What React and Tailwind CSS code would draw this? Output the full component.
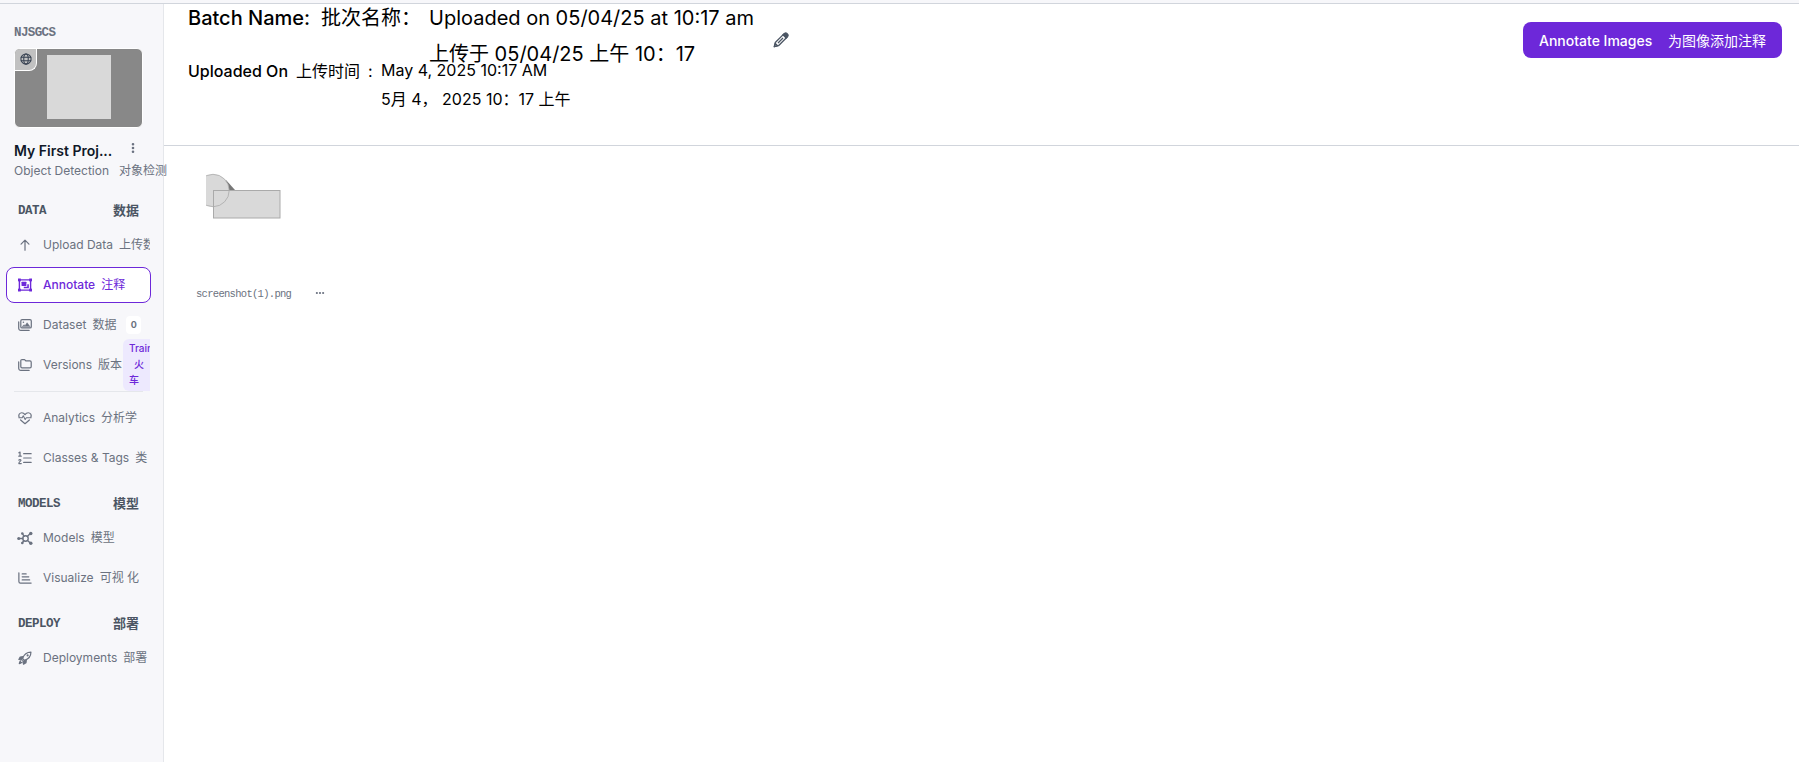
import { useState } from "react";
import clsx from "clsx";
import { FaEllipsisVertical, FaEllipsis } from "react-icons/fa6";

// Icons of the side menu
function Icon({ children, size = "size-[14px]" }) {
  return (
    <svg
      viewBox="0 0 16 16"
      className={clsx(size, "shrink-0")}
      fill="none"
      stroke="currentColor"
      strokeWidth="1.4"
      strokeLinecap="round"
      strokeLinejoin="round"
    >
      {children}
    </svg>
  );
}

const UploadIcon = () => (
  <Icon>
    <path d="M8 14V2.5M3.5 7L8 2.5 12.5 7" />
  </Icon>
);

const AnnotateIcon = () => (
  <Icon>
    <path d="M1.6 2.1h12.8v11.8H1.6z" strokeWidth="1.6" />
    <g fill="currentColor" stroke="none">
      <rect x="0" y=".6" width="3.2" height="3.2" />
      <rect x="12.8" y=".6" width="3.2" height="3.2" />
      <rect x="0" y="12.2" width="3.2" height="3.2" />
      <rect x="12.8" y="12.2" width="3.2" height="3.2" />
      <rect x="4" y="4.4" width="5.6" height="4.6" rx=".5" />
      <path d="M10.6 7h1.8v4.800H6.600V10h4z" />
    </g>
  </Icon>
);

const ImagesIcon = () => (
  <Icon>
    <rect x="3.2" y="1.8" width="12" height="9.6" rx="1.5" />
    <path d="M.8 4.5v7.3a2.4 2.4 0 0 0 2.4 2.4h9.5" />
    <path d="M5 9.8l1.8-2.2 1.2 1.2 2.4-3.4 3.2 4.4z" fill="currentColor" strokeWidth=".6" />
    <circle cx="6.2" cy="4.8" r=".9" fill="currentColor" stroke="none" />
  </Icon>
);

const FoldersIcon = () => (
  <Icon>
    <path d="M3.2 3.2c0-.8.6-1.4 1.4-1.4h2.9l1.6 1.6h4.6c.8 0 1.4.6 1.4 1.4v5c0 .8-.6 1.4-1.4 1.4H4.6c-.8 0-1.4-.6-1.4-1.4z" />
    <path d="M.8 4.5v7.3a2.4 2.4 0 0 0 2.4 2.4h9.5" />
  </Icon>
);

const PulseIcon = () => (
  <Icon>
    <path d="M1.3 7C.2 4.2 2 2 4.3 2 6 2 7.2 3 8 4.2 8.8 3 10 2 11.7 2 14 2 15.8 4.2 14.7 7" />
    <path d="M3 10.3l5 4.2 5-4.2" />
    <path d="M1 7.8h3.8l1.2-2.3 2.2 4.3 1.3-2H15" strokeWidth="1.2" />
  </Icon>
);

const ListIcon = () => (
  <Icon>
    <path d="M6.5 3H15M6.5 8H15M6.5 13H15" />
    <path d="M1 2l1.3-.7V5.8M.9 5.9h2.8M1 10.4c.6-1 2.5-.8 2.3.4-.2 1-2.3 1.5-2.3 3.5h2.7" />
  </Icon>
);

const NetworkIcon = () => (
  <Icon size="size-4">
    <circle cx="8.5" cy="8.5" r="2.7" />
    <path d="M5.8 8.5H2M10.3 6.5l2.7-2.7M10.5 10.5l2.5 2.2M7 6.2L5.7 4M6.8 10.7l-1.2 1.8" />
    <g fill="currentColor" stroke="none">
      <circle cx="1.7" cy="8.5" r="1.5" />
      <circle cx="13.8" cy="3.5" r="1.7" />
      <circle cx="13.8" cy="13.2" r="1.7" />
      <circle cx="5.3" cy="3.5" r="1.3" />
      <circle cx="5.3" cy="13" r="1.3" />
    </g>
  </Icon>
);

const ChartIcon = () => (
  <Icon>
    <path d="M1 2v10a1.8 1.8 0 0 0 1.8 1.8H15M4.8 3.3h4.5M4.8 6.700h7.500M4.800 10.200h8.500" />
  </Icon>
);

const RocketIcon = () => (
  <Icon>
    <path d="M5.2 8.5C6.8 4 10 1.2 14.8 1.2 14.8 6 12 9.2 7.5 10.8z" />
    <path
      d="M5.8 6.5L2.5 6.9 1 9.7l3.8.6M9.5 10.2l-.4 3.3L6.3 15l-.6-3.8M2.8 11.5c-1 .8-1.3 2.9-1.3 2.9s2.1-.3 2.9-1.3"
      fill="currentColor"
    />
    <circle cx="11" cy="5" r="1.2" fill="currentColor" stroke="none" />
  </Icon>
);

const GlobeIcon = () => (
  <Icon size="size-[12px]">
    <circle cx="8" cy="8" r="6.8" />
    <ellipse cx="8" cy="8" rx="3" ry="6.8" />
    <path d="M1.5 5.7h13M1.5 10.3h13" />
  </Icon>
);

const PencilIcon = () => (
  <svg
    viewBox="0 0 16 16"
    className="size-4 text-[#4b5563]"
    fill="none"
    stroke="currentColor"
    strokeWidth="1.3"
    strokeLinejoin="round"
  >
    <path d="M1.3 14.7l1-4.2 8.4-8.4 3.2 3.2-8.4 8.4z" />
    <path d="M10 2.8l1.5-1.4c.8-.7 1.7-.6 2.4.1l.6.6c.7.7.8 1.6.1 2.4L13.2 6z" fill="currentColor" />
    <path d="M5 11l5-5M1.3 14.7l1-3.2 2.2 2.2z" />
  </svg>
);

const sections = [
  {
    title: "DATA",
    titleZh: "数据",
    items: [
      { label: "Upload Data", zh: "上传数据", icon: UploadIcon },
      { label: "Annotate", zh: "注释", icon: AnnotateIcon },
      { label: "Dataset", zh: "数据", icon: ImagesIcon, count: 0 },
      { label: "Versions", zh: "版本", icon: FoldersIcon, train: true },
      { divider: true, label: "divider" },
      { label: "Analytics", zh: "分析学", icon: PulseIcon },
      { label: "Classes & Tags", zh: "类", icon: ListIcon },
    ],
  },
  {
    title: "MODELS",
    titleZh: "模型",
    items: [
      { label: "Models", zh: "模型", icon: NetworkIcon },
      { label: "Visualize", zh: "可视 化", icon: ChartIcon },
    ],
  },
  {
    title: "DEPLOY",
    titleZh: "部署",
    items: [{ label: "Deployments", zh: "部署", icon: RocketIcon }],
  },
];

function NavItem({ item, active, onSelect }) {
  const ItemIcon = item.icon;
  return (
    <button
      type="button"
      onClick={onSelect}
      className={clsx(
        "flex h-9 w-[145px] items-center overflow-x-clip rounded-lg border pl-[10px] text-left text-[12px] whitespace-nowrap",
        active ? "border-[#6d28d9] bg-white font-medium text-[#6d28d9]" : "border-transparent text-[#6b7280]"
      )}
    >
      <span className="flex w-[26px] shrink-0 items-center">
        <span className="flex w-4 justify-center">
          <ItemIcon />
        </span>
      </span>
      <span className="shrink-0">{item.label}</span>
      <span className="ml-[6px] shrink-0 font-normal">{item.zh}</span>
      {item.count !== undefined && (
        <span className="ml-[10px] flex h-[18px] w-[15px] shrink-0 items-center justify-center rounded bg-white text-[9px] font-bold">
          {item.count}
        </span>
      )}
      {item.train && (
        <span className="relative ml-px block h-[52px] w-[40px] shrink-0 rounded-md bg-[#ede9fe] pt-[1px] pl-[6px] text-[10px] leading-4 font-medium text-[#6d28d9]">
          Train
          <br />
          <span className="pl-[5px]">火</span>
          <br />车
        </span>
      )}
    </button>
  );
}

function Sidebar() {
  const [current, setCurrent] = useState("Annotate");

  return (
    <aside className="relative z-10 flex w-[164px] shrink-0 flex-col border-r border-gray-200 bg-[#f7f7fa]">
      <div className="mt-[21px] ml-[14px] h-4 font-['Liberation_Mono',monospace] text-[12.5px] leading-4 font-bold tracking-[-0.6px] text-[#6b7280]">
        NJSGCS
      </div>

      {/* Project thumbnail */}
      <div className="relative mt-[7px] ml-[14px] flex h-[80px] w-[129px] items-center justify-center overflow-hidden rounded-md border border-white bg-[#888888]">
        <div className="mb-[2px] size-[64px] bg-[#d9d9d9]" />
        <div className="absolute top-0 left-0 flex size-[22px] items-center justify-center rounded-br-lg border-r border-b border-white bg-[#c1c1c1] pb-[2px] text-[#374151]">
          <GlobeIcon />
        </div>
      </div>

      <div className="mt-[12px] ml-[14px] flex h-5 items-center">
        <div className="w-[112px] text-[14px] font-semibold whitespace-nowrap text-gray-900">My First Proj...</div>
        <FaEllipsisVertical className="mb-[5px] ml-[1px] size-3 text-[#6b7280]" />
      </div>
      <div className="mt-px ml-[14px] flex h-5 items-center gap-[10px] text-[12px] whitespace-nowrap text-[#6b7280]">
        <span>Object Detection</span>
        <span>对象检测</span>
      </div>

      <nav className="mt-[12px] flex flex-col gap-[10px] pl-[6px]">
        {sections.map((section) => (
          <div key={section.title}>
            <div className="flex h-[34px] w-[145px] items-center justify-between pr-[12px] pl-[12px] text-[#4b5563]">
              <span className="mt-[2px] font-['Liberation_Mono',monospace] text-[12.5px] font-bold tracking-[-0.5px]">
                {section.title}
              </span>
              <span className="font-['Noto_Sans_CJK_SC',sans-serif] text-[13px] font-bold">{section.titleZh}</span>
            </div>
            <div className="flex flex-col gap-1">
              {section.items.map((item) =>
                item.divider ? (
                  <div key={item.label} className="my-1 ml-2 h-px w-[129px] bg-gray-200" />
                ) : (
                  <NavItem
                    key={item.label}
                    item={item}
                    active={item.label === current}
                    onSelect={() => setCurrent(item.label)}
                  />
                )
              )}
            </div>
          </div>
        ))}
      </nav>
    </aside>
  );
}

function BatchHeader() {
  return (
    <header className="flex h-[142px] items-start justify-between border-b border-gray-300 pr-[17px] pl-6 whitespace-nowrap text-black">
      <div>
        <div className="flex h-[53px] items-start text-[20px] leading-[36px]">
          <span className="-mt-1 w-[133px] font-medium">Batch Name:</span>
          <span className="-mt-1 w-[108px]">批次名称：</span>
          <div className="-mt-1 w-[344px]">
            <div>Uploaded on 05/04/25 at 10:17 am</div>
            <div>上传于 05/04/25 上午 10：17</div>
          </div>
          <button type="button" className="mt-[28px]">
            <PencilIcon />
          </button>
        </div>
        <div className="flex items-start text-[16px] leading-[29px]">
          <span className="w-[108px] font-medium">Uploaded On</span>
          <span className="w-[72px]">上传时间</span>
          <span className="w-[13px]">:</span>
          <div className="-mt-px">
            <div>May 4, 2025 10:17 AM</div>
            <div>5月 4， 2025 10：17 上午</div>
          </div>
        </div>
      </div>
      <button
        type="button"
        className="mt-[18px] flex h-9 w-[259px] items-center justify-between rounded-lg bg-[#6d28d9] px-4 text-[14px] font-medium text-white"
      >
        <span>Annotate Images</span>
        <span className="font-normal">为图像添加注释</span>
      </button>
    </header>
  );
}

function ImageCard() {
  return (
    <div className="mt-[16px] ml-8 w-[129px]">
      <svg viewBox="0 0 112 112" className="ml-[10px] size-[112px] rounded-lg">
        <path d="M20 18l9 10h-9z" fill="#777" />
        <circle cx="7" cy="28.5" r="16.2" fill="#d9d9d9" stroke="#aaa" strokeWidth=".8" />
        <rect x="7.5" y="28.5" width="66.5" height="27.5" fill="#d9d9d9" stroke="#aaa" />
        <path d="M7.5 44.7a16.2 16.2 0 0 0 15.7-16.2" fill="none" stroke="#aaa" strokeWidth=".8" />
      </svg>
      <div className="mt-[13px] flex h-4 items-center justify-between text-[#6b7280]">
        <span className="font-['Liberation_Mono',monospace] text-[10.5px] tracking-[-0.7px]">screenshot(1).png</span>
        <FaEllipsis className="-mt-[4px] size-[10px]" />
      </div>
    </div>
  );
}

export default function App() {
  return (
    <div className="flex h-screen flex-col overflow-hidden bg-white font-['Inter','Noto_Sans_CJK_SC',sans-serif]">
      <div className="h-1 shrink-0 border-b border-gray-300 bg-[#f7f7fa]" />
      <div className="flex min-h-0 flex-1">
        <Sidebar />
        <main className="min-w-0 flex-1">
          <BatchHeader />
          <ImageCard />
        </main>
      </div>
    </div>
  );
}
